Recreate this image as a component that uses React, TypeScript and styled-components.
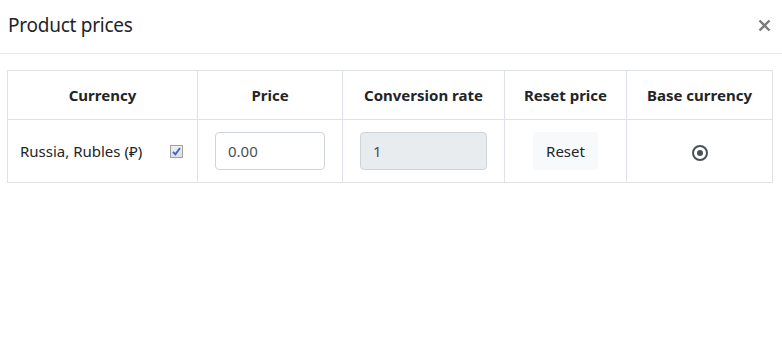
import React from "react";
import styled, { createGlobalStyle } from "styled-components";

const colors = {
  text: "#212529",
  border: "#dee2e6",
  muted: "#6c757d",
  inputBorder: "#ced4da",
  disabled: "#e9ecef",
  light: "#f8f9fa",
};

const GlobalStyle = createGlobalStyle`
  html, body {
    margin: 0;
    padding: 0;
    background: #fff;
    font-family: "Noto Sans", "Open Sans", sans-serif;
    color: ${colors.text};
  }
  * {
    box-sizing: border-box;
  }
`;

const Modal = styled.div`
  width: 782px;
  height: 361px;
  display: flex;
  flex-direction: column;
`;

const Header = styled.div`
  display: flex;
  flex-direction: row;
  align-items: center;
  justify-content: space-between;
  height: 54px;
  padding: 0 11px 2px 8px;
  border-bottom: 1px solid #e9ecef;
`;

const Title = styled.h5`
  margin: 0;
  font-size: 19px;
  font-weight: 400;
  letter-spacing: -0.25px;
  line-height: 1.2;
`;

const Close = styled.button`
  border: none;
  background: none;
  padding: 0;
  width: 14px;
  height: 14px;
  display: flex;
  align-items: center;
  justify-content: center;
  color: #7a7a7a;
  cursor: pointer;
`;

const Body = styled.div`
  padding: 16px 10px 16px 7px;
`;

const Table = styled.table`
  width: 765px;
  border-collapse: collapse;
  table-layout: fixed;
  font-size: 15px;
`;

const Th = styled.th<{ $width: number }>`
  width: ${(p) => p.$width}px;
  height: 49px;
  border: 1px solid ${colors.border};
  font-weight: 700;
  text-align: center;
  vertical-align: middle;
  padding: 0 8px;
`;

const Td = styled.td<{ $align?: string; $pad?: number }>`
  height: 63px;
  border: 1px solid ${colors.border};
  text-align: ${(p) => p.$align || "center"};
  vertical-align: middle;
  padding: 0 ${(p) => (p.$pad !== undefined ? p.$pad : 17)}px;
`;

const CurrencyCell = styled.div`
  display: flex;
  flex-direction: row;
  align-items: center;
  justify-content: space-between;
  padding-left: 12px;
  padding-right: 14px;
`;

const FakeCheck = styled.span`
  width: 13px;
  height: 13px;
  border: 1px solid #a0a0a0;
  background: linear-gradient(#f0f0f2, #dcdde2);
  display: inline-flex;
  align-items: center;
  justify-content: center;
`;

const Input = styled.input<{ $disabled?: boolean }>`
  display: block;
  width: 100%;
  height: 38px;
  border: 1px solid ${colors.inputBorder};
  border-radius: 4px;
  padding: 0 12px;
  font-family: inherit;
  font-size: 15px;
  color: #495057;
  background: ${(p) => (p.$disabled ? colors.disabled : "#fff")};
  outline: none;
`;

const ResetButton = styled.button`
  height: 38px;
  padding: 0 13px;
  border: none;
  border-radius: 4px;
  background: ${colors.light};
  color: ${colors.text};
  font-family: inherit;
  font-size: 15px;
  cursor: pointer;
`;

const Radio = styled.span`
  width: 16px;
  height: 16px;
  border-radius: 50%;
  border: 2px solid #495057;
  display: inline-flex;
  align-items: center;
  justify-content: center;
  vertical-align: middle;
  &::after {
    content: "";
    width: 6px;
    height: 6px;
    border-radius: 50%;
    background: #495057;
  }
`;

const App = () => {
  return (
    <>
      <GlobalStyle />
      <Modal>
        <Header>
          <Title>Product prices</Title>
          <Close aria-label="Close">
            <svg width="13" height="13" viewBox="0 0 13 13">
              <path
                d="M1.5 1.5 L11.5 11.5 M11.5 1.5 L1.5 11.5"
                stroke="currentColor"
                strokeWidth="2.4"
              />
            </svg>
          </Close>
        </Header>
        <Body>
          <Table>
            <thead>
              <tr>
                <Th $width={190}>Currency</Th>
                <Th $width={145}>Price</Th>
                <Th $width={162}>Conversion rate</Th>
                <Th $width={122}>Reset price</Th>
                <Th $width={146}>Base currency</Th>
              </tr>
            </thead>
            <tbody>
              <tr>
                <Td $align="left" $pad={0}>
                  <CurrencyCell>
                    <span>Russia, Rubles (₽)</span>
                    <FakeCheck>
                      <svg width="9" height="9" viewBox="0 0 9 9">
                        <path
                          d="M1 4.8 L3.4 7.4 L8 1"
                          fill="none"
                          stroke="#3a62c0"
                          strokeWidth="1.8"
                        />
                      </svg>
                    </FakeCheck>
                  </CurrencyCell>
                </Td>
                <Td>
                  <Input defaultValue="0.00" />
                </Td>
                <Td>
                  <Input $disabled readOnly defaultValue="1" />
                </Td>
                <Td>
                  <ResetButton>Reset</ResetButton>
                </Td>
                <Td>
                  <Radio />
                </Td>
              </tr>
            </tbody>
          </Table>
        </Body>
      </Modal>
    </>
  );
};

export default App;
